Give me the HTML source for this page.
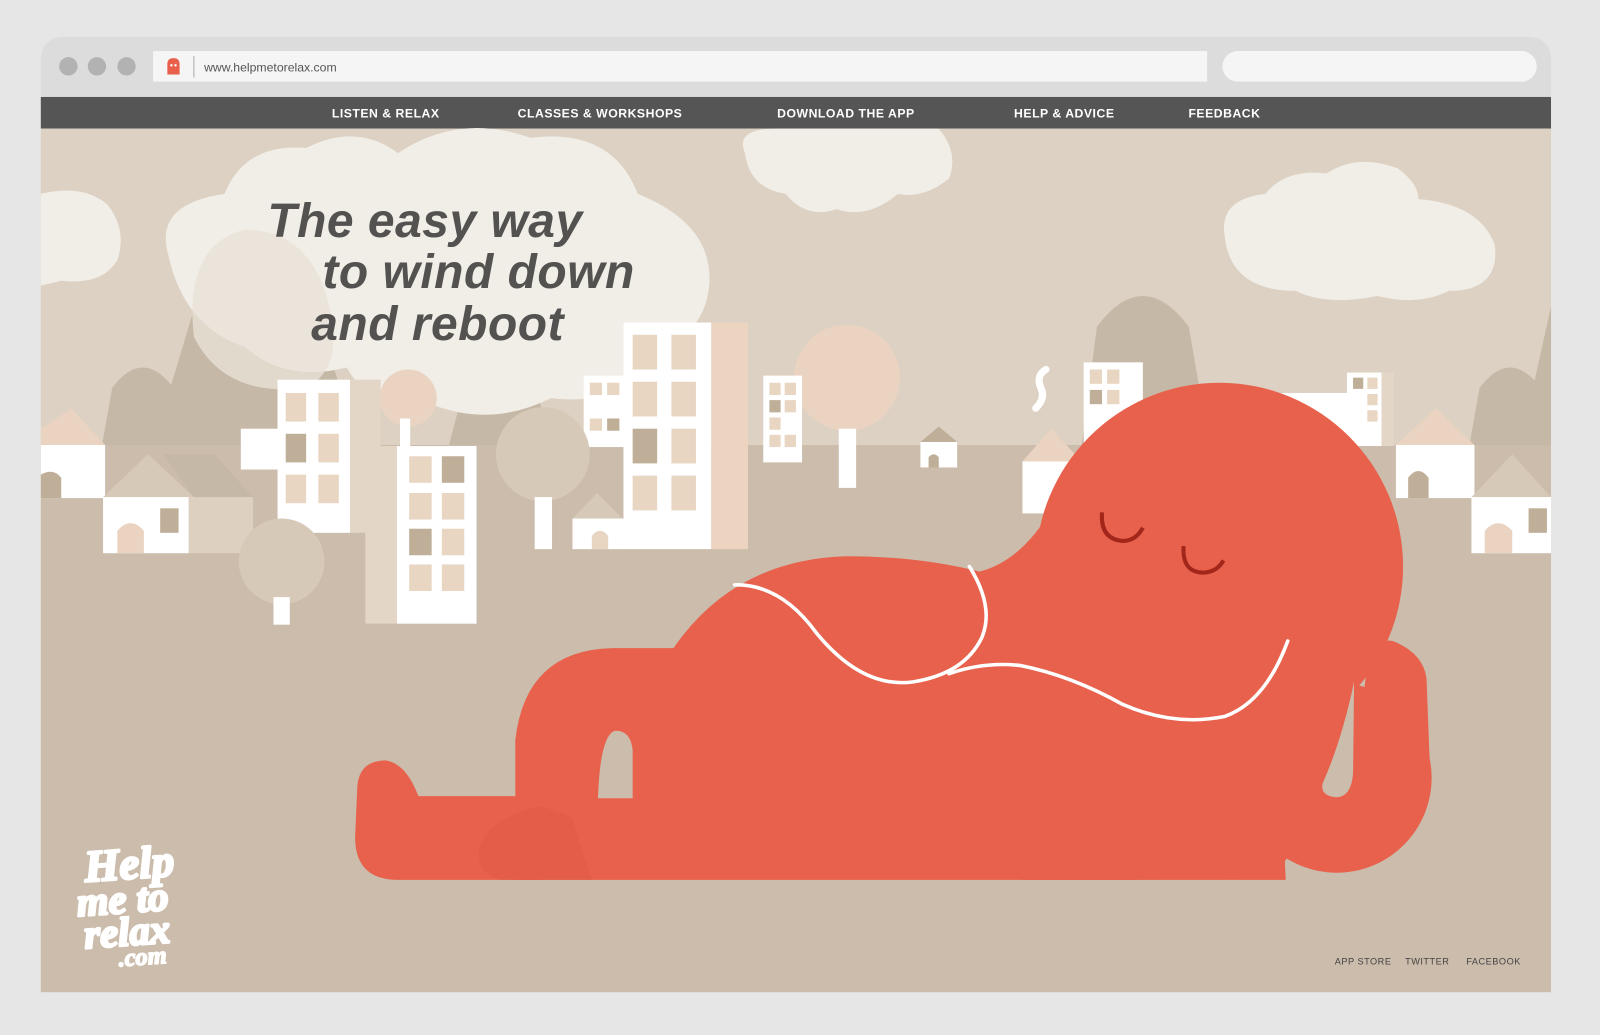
<!DOCTYPE html>
<html><head><meta charset="utf-8"><style>
html,body{margin:0;padding:0;background:#e6e6e6;width:1600px;height:1035px;overflow:hidden}
svg{display:block}
</style></head><body>
<svg width="1600" height="1035" viewBox="0 0 1568 1014" xmlns="http://www.w3.org/2000/svg" preserveAspectRatio="none">
<rect width="1568" height="1014" fill="#e6e6e6"/>
<path d="M40,60 Q40,36 64,36 L1496,36 Q1520,36 1520,60 L1520,95 L40,95 Z" fill="#dcdcdc"/>
<circle cx="67" cy="65" r="9" fill="#b2b2b2"/><circle cx="95" cy="65" r="9" fill="#b2b2b2"/><circle cx="124" cy="65" r="9" fill="#b2b2b2"/>
<rect x="150" y="50" width="1033" height="30" fill="#f5f5f5"/>
<path d="M164,73 L164,63 Q164,57 170,57 Q176,57 176,63 L176,73 Z" fill="#e8604b"/>
<circle cx="168" cy="64" r="1.2" fill="#fff"/><circle cx="172" cy="64" r="1.2" fill="#fff"/>
<line x1="190" y1="55" x2="190" y2="76" stroke="#aaa" stroke-width="1"/>
<text x="200" y="70" font-family="Liberation Sans, sans-serif" font-size="12" fill="#555">www.helpmetorelax.com</text>
<rect x="1198" y="50" width="308" height="30" rx="15" fill="#f5f5f5"/>
<rect x="40" y="95" width="1480" height="31" fill="#555555"/>
<g font-family="Liberation Sans, sans-serif" font-weight="bold" font-size="12" fill="#fff" text-anchor="middle" letter-spacing="0.5">
<text x="378" y="115">LISTEN &amp; RELAX</text>
<text x="588" y="115">CLASSES &amp; WORKSHOPS</text>
<text x="829" y="115">DOWNLOAD THE APP</text>
<text x="1043" y="115">HELP &amp; ADVICE</text>
<text x="1200" y="115">FEEDBACK</text>
</g>
<rect x="40" y="126" width="1480" height="846" fill="#dcd1c2"/>
<rect x="40" y="436" width="1480" height="536" fill="#cbbcab"/>
<g fill="#c6b8a6">
<path d="M100,436 L110,380 Q140,340 170,380 L185,436 Z"/>
<path d="M150,436 L200,270 Q250,200 300,270 L350,436 Z"/>
<path d="M1060,436 L1075,320 Q1120,260 1165,320 L1185,436 Z"/>
<path d="M1440,436 L1450,380 Q1480,340 1510,380 L1520,436 Z"/>
<path d="M1490,436 L1520,300 L1520,436 Z"/>
<path d="M440,436 L460,360 Q490,320 520,360 L540,436 Z"/>
</g>
<g fill="#f1ede7">
<path d="M165,250 Q150,200 220,190 Q240,140 300,145 Q350,120 390,150 Q450,110 520,135 Q600,125 625,190 Q700,220 695,280 Q690,330 640,340 Q610,400 540,390 Q480,420 420,395 Q360,400 340,360 Q280,375 240,340 Q180,320 165,250 Z"/>
<path d="M730,150 Q720,126 760,126 L920,126 Q940,150 930,175 Q905,195 880,190 Q850,215 820,205 Q790,215 770,190 Q735,185 730,150 Z"/>
<path d="M1200,230 Q1195,195 1240,190 Q1260,165 1300,170 Q1330,150 1370,165 Q1390,180 1390,195 Q1450,200 1465,240 Q1470,285 1420,285 Q1390,300 1350,290 Q1300,300 1270,285 Q1205,285 1200,230 Z"/>
<path d="M40,190 Q80,180 105,200 Q125,225 115,255 Q100,280 60,275 L40,280 Z"/>
</g>
<g fill="#e8e1d7" opacity="0.8">
<path d="M190,330 Q180,240 240,225 Q300,225 320,290 Q340,360 300,380 Q220,390 190,330 Z"/>
</g>
<circle cx="830" cy="370" r="52" fill="#ead3c0"/>
<rect x="822" y="420" width="17" height="58" fill="#fff"/>
<circle cx="400" cy="390" r="28" fill="#ead3c0"/>
<rect x="392" y="410" width="10" height="30" fill="#fff"/>
<g>
<rect x="343" y="372" width="30" height="150" fill="#e3d6c6"/>
<rect x="272" y="372" width="71" height="150" fill="#fff"/>
<rect x="236" y="420" width="40" height="40" fill="#fff"/>
<g fill="#e8d5c2"><rect x="280" y="385" width="20" height="28"/><rect x="312" y="385" width="20" height="28"/><rect x="312" y="425" width="20" height="28"/><rect x="280" y="465" width="20" height="28"/><rect x="312" y="465" width="20" height="28"/></g>
<rect x="280" y="425" width="20" height="28" fill="#bfae98"/>
<rect x="358" y="437" width="31" height="174" fill="#e3d6c6"/>
<rect x="389" y="437" width="78" height="174" fill="#fff"/>
<g fill="#e8d5c2"><rect x="401" y="447" width="22" height="26"/><rect x="401" y="483" width="22" height="26"/><rect x="433" y="483" width="22" height="26"/><rect x="433" y="518" width="22" height="26"/><rect x="401" y="553" width="22" height="26"/><rect x="433" y="553" width="22" height="26"/></g>
<rect x="433" y="447" width="22" height="26" fill="#bfae98"/><rect x="401" y="518" width="22" height="26" fill="#bfae98"/>
<rect x="697" y="316" width="36" height="222" fill="#ecd4c0"/>
<rect x="611" y="316" width="86" height="222" fill="#fff"/>
<rect x="572" y="368" width="40" height="70" fill="#fff"/>
<g fill="#e8d5c2"><rect x="620" y="328" width="24" height="34"/><rect x="658" y="328" width="24" height="34"/><rect x="620" y="374" width="24" height="34"/><rect x="658" y="374" width="24" height="34"/><rect x="658" y="420" width="24" height="34"/><rect x="620" y="466" width="24" height="34"/><rect x="658" y="466" width="24" height="34"/><rect x="578" y="375" width="12" height="12"/><rect x="595" y="375" width="12" height="12"/><rect x="578" y="410" width="12" height="12"/></g>
<rect x="620" y="420" width="24" height="34" fill="#bfae98"/><rect x="595" y="410" width="12" height="12" fill="#bfae98"/>
<rect x="748" y="368" width="38" height="85" fill="#fff"/>
<g fill="#e8d5c2"><rect x="754" y="375" width="11" height="12"/><rect x="769" y="375" width="11" height="12"/><rect x="769" y="392" width="11" height="12"/><rect x="754" y="409" width="11" height="12"/><rect x="754" y="426" width="11" height="12"/><rect x="769" y="426" width="11" height="12"/></g>
<rect x="754" y="392" width="11" height="12" fill="#bfae98"/>
<rect x="1062" y="355" width="58" height="80" fill="#fff"/>
<g fill="#e8d5c2"><rect x="1068" y="362" width="12" height="14"/><rect x="1085" y="362" width="12" height="14"/><rect x="1085" y="382" width="12" height="14"/></g>
<rect x="1068" y="382" width="12" height="14" fill="#bfae98"/>
<rect x="1250" y="385" width="80" height="52" fill="#fff"/>
<rect x="1320" y="365" width="34" height="72" fill="#fff"/><rect x="1354" y="365" width="12" height="72" fill="#e3d6c6"/>
<g fill="#e8d5c2"><rect x="1340" y="370" width="10" height="11"/><rect x="1340" y="386" width="10" height="11"/><rect x="1340" y="402" width="10" height="11"/></g>
<rect x="1326" y="370" width="10" height="11" fill="#bfae98"/>
<path d="M1015,400 Q1025,390 1020,380 Q1015,368 1025,362" stroke="#fff" stroke-width="7" fill="none" stroke-linecap="round"/>
</g>
<g>
<path d="M40,436 L40,420 L70,400 L103,436 Z" fill="#ead3c0"/>
<rect x="40" y="436" width="63" height="52" fill="#fff"/><path d="M40,488 L40,465 Q52,458 60,468 L60,488 Z" fill="#bfae98"/>
<path d="M101,487 L145,445 L190,487 Z" fill="#d7c9b8"/><path d="M160,445 L210,445 L248,487 L190,487 Z" fill="#c6b8a6"/>
<rect x="101" y="487" width="84" height="55" fill="#fff"/><rect x="185" y="487" width="63" height="55" fill="#ddd0c0"/>
<path d="M115,542 L115,520 Q128,505 141,520 L141,542 Z" fill="#ead3c0"/><rect x="157" y="498" width="18" height="24" fill="#bfae98"/>
<path d="M902,433 L920,418 L938,433 Z" fill="#bfae98"/><rect x="902" y="433" width="36" height="25" fill="#fff"/><path d="M910,458 L910,448 Q915,442 920,448 L920,458 Z" fill="#bfae98"/>
<path d="M1002,452 L1030,420 L1060,452 Z" fill="#ead3c0"/><rect x="1002" y="452" width="60" height="51" fill="#fff"/>
<path d="M1368,436 L1407,400 L1445,436 Z" fill="#ead3c0"/><rect x="1368" y="436" width="77" height="52" fill="#fff"/><path d="M1380,488 L1380,468 Q1390,455 1400,468 L1400,488 Z" fill="#bfae98"/>
<path d="M1442,487 L1482,445 L1520,487 Z" fill="#d7c9b8"/><rect x="1442" y="487" width="78" height="55" fill="#fff"/><path d="M1455,542 L1455,520 Q1468,505 1482,520 L1482,542 Z" fill="#ead3c0"/><rect x="1498" y="498" width="18" height="24" fill="#bfae98"/>
<path d="M561,508 L585,483 L610,508 Z" fill="#d7c9b8"/><rect x="561" y="508" width="50" height="30" fill="#fff"/><path d="M580,538 L580,525 Q588,515 596,525 L596,538 Z" fill="#e8d5c2"/>
</g>
<circle cx="532" cy="445" r="46" fill="#d7c9b8"/><rect x="524" y="487" width="17" height="51" fill="#fff"/>
<circle cx="276" cy="550" r="42" fill="#d7c9b8"/><rect x="268" y="585" width="16" height="27" fill="#fff"/>
<g font-family="Liberation Sans, sans-serif" font-weight="bold" font-style="italic" font-size="47" fill="#545250" letter-spacing="0.5">
<text x="262" y="232">The easy way</text>
<text x="316" y="282">to wind down</text>
<text x="305" y="333">and reboot</text>
</g>
<g fill="#e8614c">
<circle cx="1195" cy="555" r="180"/>
<path d="M505,862 L505,725 Q515,637 600,635 L660,635 Q720,548 830,545 Q900,545 960,560 Q1000,550 1030,500 L1250,650 L1260,862 Z"/>
<path d="M350,775 Q350,745 378,745 Q398,748 410,780 L530,780 L530,862 L390,862 Q348,862 348,820 Z"/>
<circle cx="1310" cy="762" r="93"/>
<path d="M1325,775 L1340,650 Q1345,625 1365,628 Q1395,640 1398,665 L1402,770 Z"/>
<path d="M1000,780 L1310,780 L1250,855 Q1150,862 1100,862 L1000,862 Z"/>
</g>
<path d="M620,782 L620,735 Q618,715 602,716 Q588,722 586,782 Z" fill="#cbbcab"/>
<path d="M1327,668 L1326,758 Q1324,782 1308,781 Q1294,779 1296,768 Q1315,725 1327,668 Z" fill="#cbbcab"/>
<path d="M470,830 Q480,800 530,790 L560,800 L580,862 L490,862 Q465,855 470,830 Z" fill="#e05a46" opacity="0.6"/>
<g stroke="#fff" stroke-width="3.5" fill="none" stroke-linecap="round">
<path d="M720,573 Q765,572 800,620 Q845,675 895,668 Q945,660 962,625 Q975,595 950,555"/>
<path d="M930,660 Q965,648 1000,652 Q1050,662 1100,690 Q1150,712 1200,702 Q1240,688 1262,628"/>
</g>
<g stroke="#a3261b" stroke-width="4" fill="none">
<path d="M1080,502 Q1078,528 1100,530 Q1113,530 1120,517"/>
<path d="M1160,535 Q1158,561 1180,561 Q1193,560 1199,549"/>
</g>
<g font-family="Liberation Serif, serif" font-weight="bold" font-style="italic" fill="#fff" stroke="#fff" stroke-width="2.5" stroke-linejoin="round" transform="rotate(-4 140 880)">
<text x="85" y="860" font-size="44">Help</text>
<text x="75" y="893" font-size="40">me to</text>
<text x="80" y="925" font-size="40">relax</text>
<text x="112" y="945" font-size="24" stroke-width="1.5">.com</text>
</g>
<g font-family="Liberation Sans, sans-serif" font-size="9" fill="#444" letter-spacing="0.5">
<text x="1308" y="945">APP STORE</text>
<text x="1377" y="945">TWITTER</text>
<text x="1437" y="945">FACEBOOK</text>
</g>
</svg>
</body></html>
